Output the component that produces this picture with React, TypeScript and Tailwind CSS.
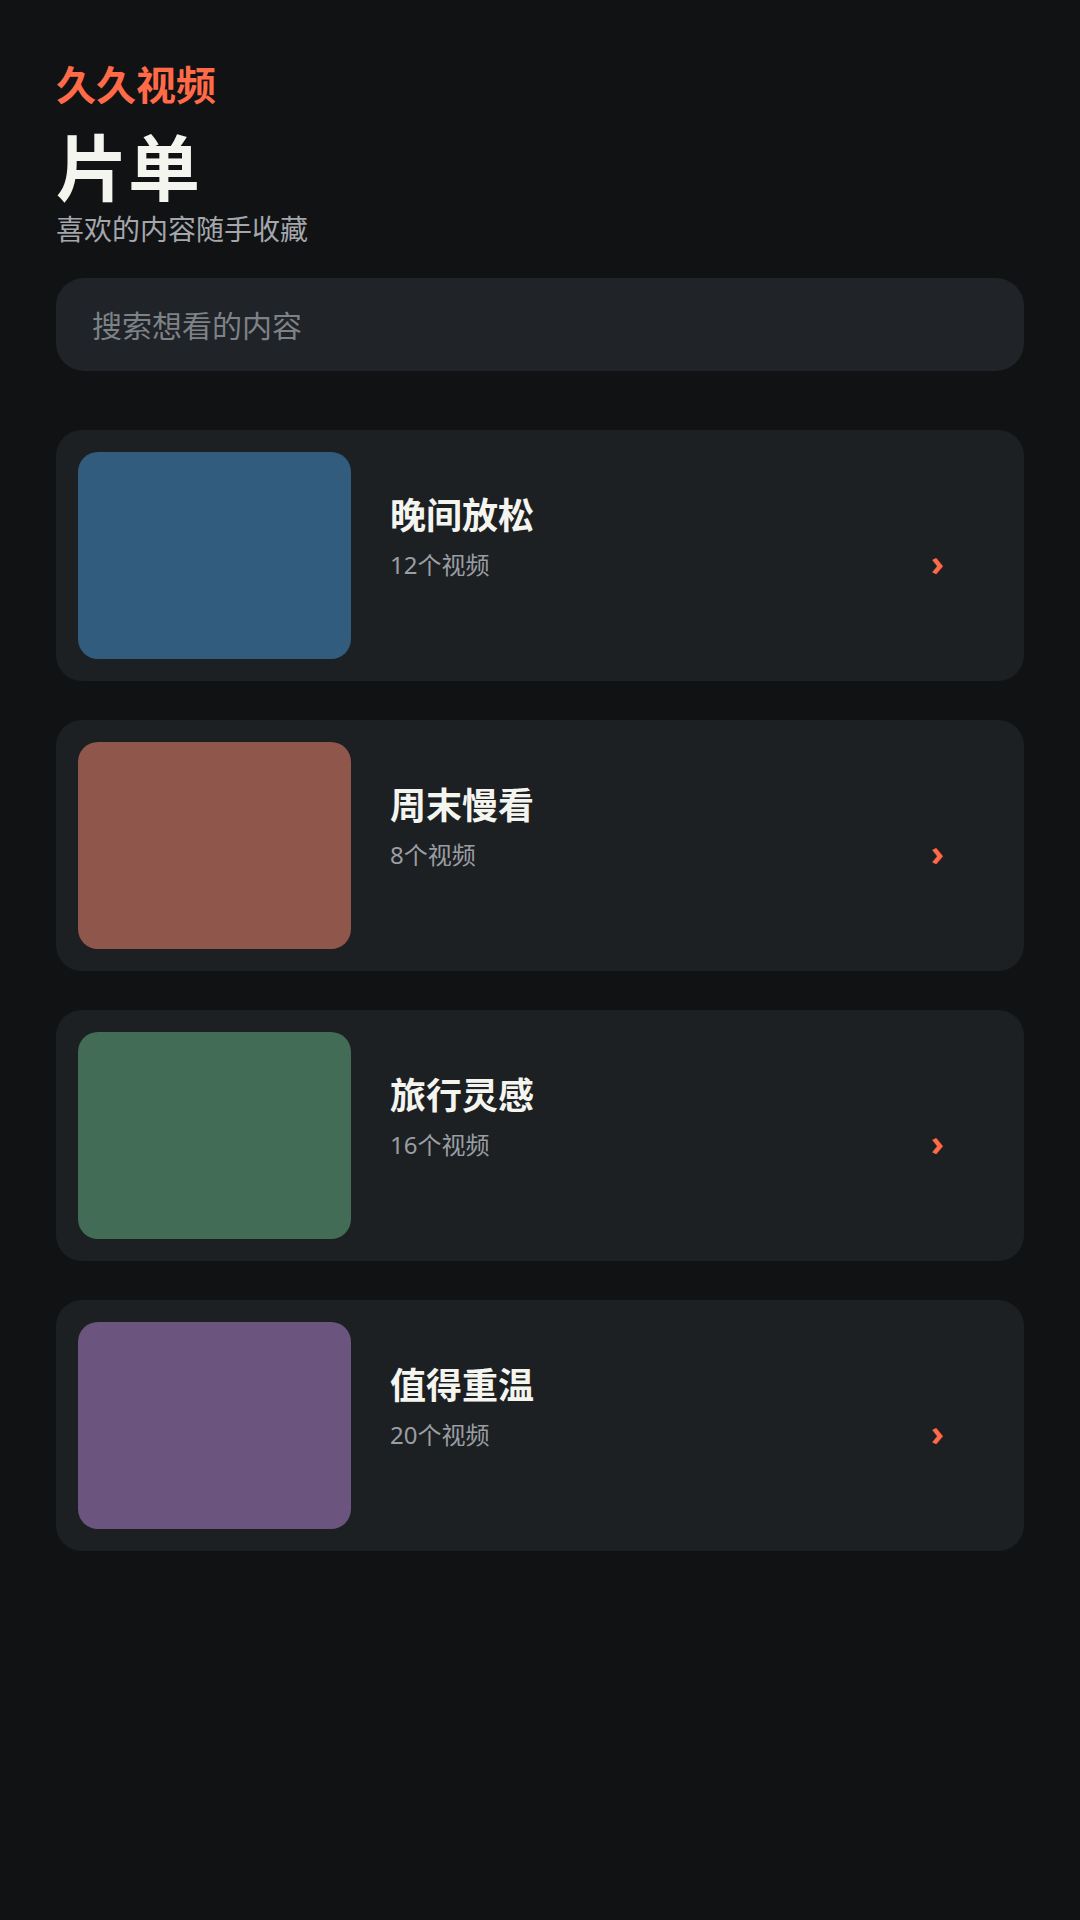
import React from 'react';

const lists = [
    { title: '晚间放松', count: '12个视频', color: 'bg-[#315c7e]' },
    { title: '周末慢看', count: '8个视频', color: 'bg-[#8f574b]' },
    { title: '旅行灵感', count: '16个视频', color: 'bg-[#436c56]' },
    { title: '值得重温', count: '20个视频', color: 'bg-[#6b557f]' },
];

const App = () => {
    return (
        <div
            className="min-h-[1920px] w-full bg-[#111214] px-[56px] pt-[57px]"
            style={{ fontFamily: '"Noto Sans", "Noto Sans CJK SC", sans-serif' }}
        >
            {/* Header */}
            <div className="text-[40px] leading-[56px] font-bold text-[#ff6a48]">久久视频</div>
            <h1 className="mt-[14px] text-[72px] leading-[80px] font-bold text-[#f5f5f0]">片单</h1>
            <p className="mt-[4px] text-[28px] leading-[36px] text-[#a3a7ac]">喜欢的内容随手收藏</p>

            {/* Search */}
            <div className="mt-[31px] flex h-[93px] items-center rounded-[28px] bg-[#202328] px-[36px]">
                <span className="pt-[2px] text-[30px] text-[#7d8287]">搜索想看的内容</span>
            </div>

            {/* Lists */}
            <div className="mt-[59px] flex flex-col gap-[39px]">
                {lists.map((item) => (
                    <div key={item.title} className="flex h-[251px] items-start rounded-[26px] bg-[#1d2023] p-[22px]">
                        <div className={`h-[207px] w-[273px] shrink-0 rounded-[20px] ${item.color}`} />
                        <div className="ml-[39px] mt-[44px] flex flex-1 flex-col">
                            <span className="text-[36px] leading-[40px] font-bold text-[#f5f5f0]">{item.title}</span>
                            <span className="mt-[13px] text-[24px] leading-[32px] text-[#9a9ea3]">{item.count}</span>
                        </div>
                        <div className="mr-[58px] self-center pt-[14px] text-[36px] font-bold leading-none text-[#ff6a48]">›</div>
                    </div>
                ))}
            </div>
        </div>
    );
};

export default App;
